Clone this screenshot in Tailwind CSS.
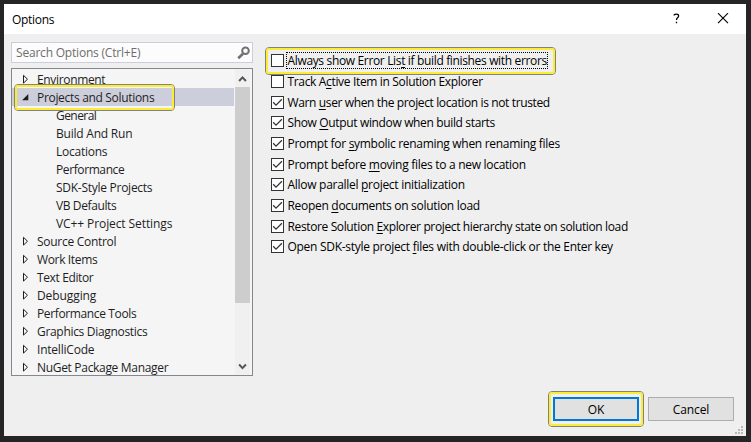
<!DOCTYPE html>
<html lang="en">
<head>
<meta charset="utf-8">
<title>Options</title>
<script src="https://cdn.jsdelivr.net/npm/@tailwindcss/browser@4"></script>
</head>
<body class="w-[751px] h-[442px] overflow-hidden bg-[#252526] p-1 font-['Open_Sans','Noto_Sans',sans-serif] text-[12px] leading-[18px] text-black">
<div class="relative w-[742px] h-[432px] bg-[#efefef] flex flex-col">
  <header class="h-[30px] shrink-0 bg-white flex items-center pl-2 pr-[17px]">
    <h1 class="grow pt-px"><span data-w="42">Options</span></h1>
    <svg class="w-[8px] h-[12px] mr-[36px]" viewBox="0 0 8 12" fill="none" stroke="#000" stroke-width="1.3"><path d="M1.2 2.6V1.7Q2 1.1 3.4 1.1Q5.6 1.1 5.6 2.9Q5.6 3.9 4.5 4.7Q3.5 5.5 3.5 7M3.5 8.7V10.3"/></svg>
    <svg class="w-[12px] h-[12px]" viewBox="0 0 12 12" fill="none" stroke="#000" stroke-width="1.15"><path d="M1 .2L11 10.2M11 .2L1 10.2"/></svg>
  </header>
  <main class="flex grow items-start pl-[7px] pt-2">
    <aside class="w-[242px]">
      <div class="h-[21px] border border-[#cccedb] bg-[#fcfcfc] flex items-center pl-1 pr-[2px]">
        <span class="grow pt-px text-[#6d6d6d]"><span data-w="124">Search Options (Ctrl+E)</span></span>
        <svg class="w-[13px] h-[14px]" viewBox="0 0 13 14" fill="none" stroke="#717171"><circle cx="8.5" cy="4.8" r="3.3" stroke-width="2"/><path d="M6 7.7L1.2 12.3" stroke-width="2.6"/></svg>
      </div>
      <div class="mt-[5px] h-[308px] border border-[#828790] bg-[#f5f5f5] flex overflow-hidden">
        <ul id="tree" class="w-[222px] pt-px text-[#1e1e1e]"></ul>
        <div class="ml-px w-[15px] h-[306px] bg-[#f0f0f0] flex flex-col items-center">
          <svg class="w-[15px] h-[18px] shrink-0" viewBox="0 0 15 18" fill="none" stroke="#555" stroke-width="2"><path d="M4.1 12L7.5 8.4L10.9 12"/></svg>
          <div class="w-[15px] h-[216px] bg-[#cdcdcd]"></div>
          <div class="grow"></div>
          <svg class="w-[15px] h-[17px] shrink-0" viewBox="0 0 15 17" fill="none" stroke="#555" stroke-width="2"><path d="M4.1 6.5L7.5 10.1L10.9 6.5"/></svg>
        </div>
      </div>
    </aside>
    <section id="checks" class="ml-[18px] pt-[8.6px] flex flex-col"></section>
  </main>
  <footer class="flex gap-[9px] pl-[549px] pb-[15px]">
    <button class="w-[86px] h-[24px] pt-px border-2 border-[#0078d7] bg-[#e1e1e1] flex items-center justify-center"><span data-w="16">OK</span></button>
    <button class="w-[86px] h-[24px] pt-px border border-[#adadad] bg-[#e1e1e1] flex items-center justify-center"><span data-w="36">Cancel</span></button>
  </footer>

  <svg class="absolute right-[3px] bottom-[2px] w-[8px] h-[8px]" viewBox="0 0 8 8" fill="#b9b9b9"><path d="M6 0h2v2H6zM3 3h2v2H3zM6 3h2v2H6zM0 6h2v2H0zM3 6h2v2H3zM6 6h2v2H6z"/></svg>

  <!-- Highlight frames -->
  <div class="absolute left-[10px] top-[80px] w-[161px] h-[27px] rounded-[4px] border border-[#83837c]"><div class="w-full h-full rounded-[3px] border-2 border-[#fbed37]"></div></div>
  <div class="absolute left-[261px] top-[43px] w-[291px] h-[28px] rounded-[4px] border border-[#83837c]"><div class="w-full h-full rounded-[3px] border-2 border-[#fbed37]"></div></div>
  <div class="absolute left-[544px] top-[387px] w-[96px] h-[36px] rounded-[4px] border border-[#83837c]"><div class="w-full h-full rounded-[3px] border-2 border-[#fbed37]"></div></div>
</div>
<script>
const tree = [
  ['Environment', 68, 'closed'], ['Projects and Solutions', 117, 'open'],
  ['General', 40], ['Build And Run', 76], ['Locations', 51], ['Performance', 68],
  ['SDK-Style Projects', 96], ['VB Defaults', 60], ['VC++ Project Settings', 116],
  ['Source Control', 79, 'closed'], ['Work Items', 60, 'closed'], ['Text Editor', 56, 'closed'],
  ['Debugging', 59, 'closed'], ['Performance Tools', 99, 'closed'], ['Graphics Diagnostics', 110, 'closed'],
  ['IntelliCode', 57, 'closed'], ['NuGet Package Manager', 131, 'closed']
];
const arrow = {
  closed: '<svg class="w-[8px] h-[10px]" viewBox="0 0 8 10" fill="none" stroke="#1e1e1e"><path d="M1.5 1.3V9.1L5.5 5.2z"/></svg>',
  open: '<svg class="w-[8px] h-[10px]" viewBox="0 0 8 10" fill="#1e1e1e"><path d="M6.3 2V8.2H.1z"/></svg>'
};
document.getElementById('tree').innerHTML = tree.map(([t, w, s]) =>
  s ? `<li class="h-[18px] flex items-center pl-[10px] ${s === 'open' ? 'bg-[#cccedb]' : ''}">${arrow[s]}<span class="ml-[7px] mt-px h-[17px]"><span data-w="${w}">${t}</span></span></li>`
    : `<li class="h-[18px] flex items-center pl-[44px]"><span class="mt-px h-[17px]"><span data-w="${w}">${t}</span></span></li>`).join('');

const checks = [
  ['Always show Error Lis<u>t</u> if build finishes with errors', 259, 0],
  ['Track A<u>c</u>tive Item in Solution Explorer', 195, 0],
  ['Warn <u>u</u>ser when the project location is not trusted', 262, 1],
  ['Show <u>O</u>utput window when build starts', 207, 1],
  ['Prompt for <u>s</u>ymbolic renaming when renaming files', 272, 1],
  ['Prompt before <u>m</u>oving files to a new location', 238, 1],
  ['Allow parallel <u>p</u>roject initialization', 177, 1],
  ['Reopen <u>d</u>ocuments on solution load', 192, 1],
  ['Restore Solution <u>E</u>xplorer project hierarchy state on solution load', 340, 1],
  ['Open SDK-style project <u>f</u>iles with double-click or the Enter key', 325, 1]
];
document.getElementById('checks').innerHTML = checks.map(([t, w, on], i) =>
  `<label class="h-[20.66px] flex items-center"><span class="w-[13px] h-[13px] border border-[#333] bg-white">${on ? '<svg class="w-[11px] h-[11px]" viewBox="0 0 11 11" fill="none" stroke="#333" stroke-width="1.25"><path d="M1.2 5.3L4 8.2L9.9 2.3"/></svg>' : ''}</span><span class="ml-[2px] pl-[0.5px] h-[17px] leading-[16px] border border-dotted ${i ? 'border-transparent' : 'border-black'}"><span class="underline-offset-2" data-w="${w}">${t}</span></span></label>`).join('');

/* Track each label so that it fills its nominal width. */
const ctx = document.createElement('canvas').getContext('2d');
ctx.font = '12px "Open Sans", "Noto Sans", sans-serif';
document.querySelectorAll('[data-w]').forEach(e => {
  const t = e.textContent;
  e.style.whiteSpace = 'nowrap';
  e.style.letterSpacing = ((+e.dataset.w + 0.3 - ctx.measureText(t).width) / t.length).toFixed(3) + 'px';
});
</script>
</body>
</html>
